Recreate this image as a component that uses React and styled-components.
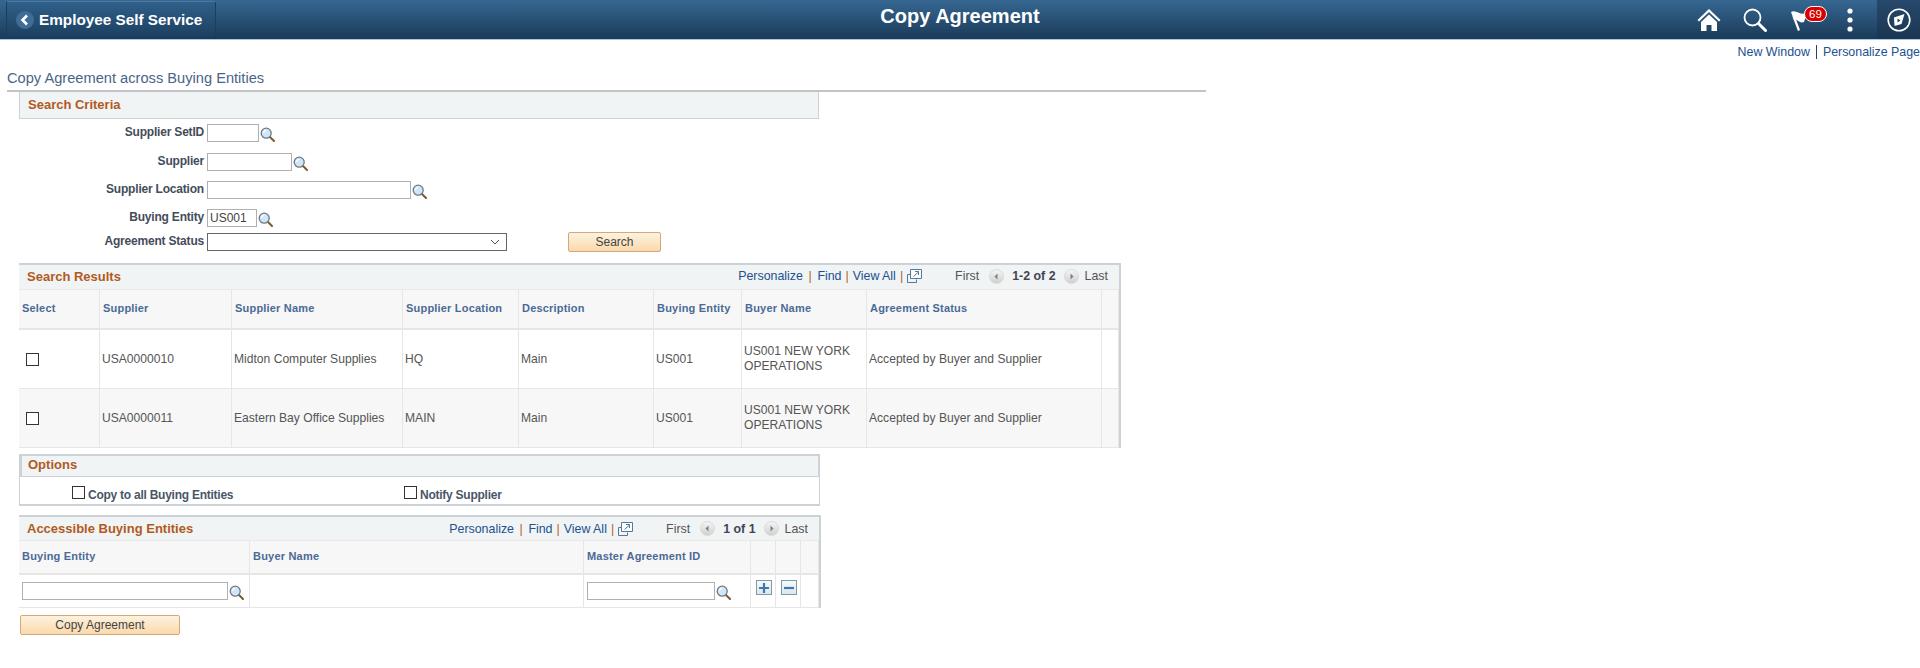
import React from "react";
import styled, { createGlobalStyle } from "styled-components";

const Global = createGlobalStyle`
  html, body { margin: 0; padding: 0; background: #fff; }
  body { font-family: "Liberation Sans", Arial, sans-serif; font-size: 12px; color: #444; }
  * { box-sizing: border-box; }
`;

const Banner = styled.header`
  display: grid;
  grid-template-columns: 1fr auto 1fr;
  height: 40px;
  background: linear-gradient(#366791 0%, #2a5378 45%, #1a3a58 100%);
  border-bottom: 1px solid #a9c6e4;
`;
const BackButton = styled.button`
  justify-self: start;
  display: flex;
  align-items: center;
  width: 210px;
  height: 37px;
  margin: 1px 0 0 6px;
  padding: 0 0 0 9px;
  gap: 5px;
  background: linear-gradient(#30608a, #1c3f60);
  border: 1px solid #1d3c59;
  border-top-color: #4c7aa3;
  border-radius: 3px;
  color: #fff;
  font: bold 15.3px "Liberation Sans", Arial, sans-serif;
`;
const BannerTitle = styled.h1`
  margin: 0;
  font: bold 20px/33px "Liberation Sans", Arial, sans-serif;
  color: #fff;
`;
const BannerIcons = styled.div`
  justify-self: end;
  display: flex;
  align-items: center;
  height: 39px;
`;
const IconSlot = styled.span`
  display: flex;
  align-items: center;
  margin-right: ${(p) => p.$gap}px;
`;
const Flag = styled.span`
  position: relative;
  display: flex;
  width: 36px;
  margin-right: 20px;
`;
const Badge = styled.span`
  position: absolute;
  left: 13px;
  top: -3px;
  width: 23px;
  height: 16px;
  border-radius: 8px;
  background: #d80000;
  border: 1px solid #fff;
  color: #fff;
  font-size: 11.5px;
  line-height: 14px;
  text-align: center;
`;
const CompassPanel = styled.span`
  display: flex;
  align-items: center;
  justify-content: center;
  width: 43px;
  height: 39px;
  background: linear-gradient(#28496c, #1a3550);
`;
const LinkBar = styled.nav`
  display: flex;
  justify-content: flex-end;
  align-items: center;
  height: 14px;
  margin-top: 5px;
  font-size: 12.4px;
`;
const PageLink = styled.a`
  color: #23508f;
`;
const LinkDivider = styled.span`
  width: 1px;
  height: 14px;
  margin: 0 6px;
  background: #2c3f70;
`;
const PageTitle = styled.h2`
  width: 1199px;
  height: 33px;
  margin: 0 0 0 7px;
  padding-top: 10px;
  border-bottom: 2px solid #c4c4c4;
  font: normal 14.65px/18px "Liberation Sans", Arial, sans-serif;
  color: #4a6488;
`;
const SectionBar = styled.div`
  display: flex;
  align-items: center;
  justify-content: space-between;
  height: ${(p) => p.$h}px;
  padding-left: 8px;
  padding-bottom: ${(p) => p.$pb || 0}px;
  background: #f0f4f4;
  color: #b25a1e;
  font-weight: bold;
  font-size: 13px;
`;
const CriteriaBar = styled(SectionBar)`
  width: 800px;
  margin-left: 19px;
  border: 1px solid #ccd2d6;
  border-top: 0;
`;
const Form = styled.div`
  display: flex;
  flex-direction: column;
  margin-top: 5px;
`;
const FormRow = styled.div`
  display: flex;
  align-items: center;
  height: 18px;
  margin-bottom: ${(p) => p.$after}px;
`;
const FormLabel = styled.label`
  width: 204px;
  margin-right: 3px;
  text-align: right;
  font-weight: bold;
  font-size: 12px;
  letter-spacing: -0.2px;
  color: #444c5a;
  position: relative;
  top: -1px;
`;
const TextInput = styled.input`
  width: ${(p) => p.$w}px;
  height: 18px;
  padding: 0 2px;
  border: 1px solid #b0b0b0;
  border-radius: 0;
  background: #fff;
  font: 12px "Liberation Sans", Arial, sans-serif;
  color: #444;
  outline: none;
`;
const Lookup = styled.svg`
  display: block;
  flex: none;
  margin-left: 1px;
  margin-top: 2px;
`;
const SelectBox = styled.div`
  display: flex;
  align-items: center;
  justify-content: flex-end;
  width: 300px;
  height: 18px;
  padding-right: 6px;
  border: 1px solid #666;
  background: #fff;
`;
const ActionButton = styled.button`
  width: ${(p) => p.$w}px;
  height: 20px;
  padding: 0;
  margin-left: ${(p) => p.$left}px;
  border: 1px solid #d4a878;
  border-radius: 2px;
  background: linear-gradient(#fdf2df, #fbd9ac);
  color: #444;
  font: 12px "Liberation Sans", Arial, sans-serif;
`;
const GridBox = styled.section`
  width: ${(p) => p.$w}px;
  margin: ${(p) => p.$top}px 0 0 19px;
  border-top: 2px solid #ccd2d6;
  border-right: 2px solid #ccd2d6;
`;
const Toolbar = styled.div`
  display: flex;
  align-items: center;
  font-weight: normal;
  font-size: 12.4px;
  color: #555;
  padding-right: 11px;
`;
const ToolLink = styled.a`
  color: #23508f;
`;
const ToolSep = styled.span`
  color: #b25a1e;
  margin: 0 ${(p) => p.$m}px;
`;
const PageCount = styled.b`
  margin: 0 8px;
  color: #445;
`;
const First = styled.span`
  margin: 0 10px 0 33px;
`;
const Last = styled.span`
  margin-left: 6px;
`;
const Table = styled.div`
  display: grid;
  grid-template-columns: ${(p) => p.$cols};
`;
const HeadCell = styled.div`
  display: flex;
  align-items: center;
  height: ${(p) => p.$h}px;
  padding: 0 0 2px 3px;
  background: #f7f7f7;
  border-right: 1px solid #e6e6e6;
  border-bottom: 2px solid #e6e6e6;
  border-top: 1px solid #e8e8e8;
  font-weight: bold;
  font-size: 11px;
  letter-spacing: 0.2px;
  color: #4a6a96;
`;
const Cell = styled.div`
  display: flex;
  align-items: center;
  height: ${(p) => p.$h}px;
  padding-left: 2px;
  background: ${(p) => (p.$alt ? "#f7f7f7" : "#fff")};
  border-right: 1px solid #e6e6e6;
  border-bottom: 1px solid #e6e6e6;
  font-size: 12.1px;
  line-height: 15px;
  color: #555;
`;
const CheckCell = styled(Cell)`
  padding-left: 7px;
`;
const InputCell = styled(Cell)`
  padding-left: 3px;
`;
const Check = styled.span`
  display: block;
  flex: none;
  width: 13px;
  height: 13px;
  border: 1px solid #333;
  background: #fff;
`;
const OptionsBox = styled.section`
  width: 801px;
  height: 52px;
  margin: 6px 0 0 19px;
  border: 1px solid #ccd2d6;
  border-top-width: 2px;
  border-bottom-width: 2px;
`;
const OptionsBar = styled(SectionBar)`
  border-bottom: 1px solid #ccd2d6;
  border-left: 2px solid #ccd2d6;
  border-right: 1px solid #ccd2d6;
  padding-left: 6px;
`;
const OptionsRow = styled.div`
  display: grid;
  grid-template-columns: 332px auto;
  justify-content: start;
  padding: 9px 0 0 52px;
`;
const OptionLabel = styled.label`
  display: flex;
  align-items: flex-start;
  gap: 3px;
  font-weight: bold;
  font-size: 12px;
  letter-spacing: -0.25px;
  line-height: 18px;
  color: #4a5668;
`;
const AddRemove = styled.span`
  display: flex;
  align-items: center;
  justify-content: center;
  width: 16px;
  height: 15px;
  margin: -7px 0 0 3px;
  border: 1px solid #7d9aa8;
  background: linear-gradient(#f6f9fa, #dde7ec);
`;
const FooterAction = styled.div`
  margin: 7px 0 0 20px;
  display: flex;
`;

const Glass = () => (
  <Lookup width="15" height="15" viewBox="0 0 15 15">
    <path d="M10 10L14 14" stroke="#7a5a34" strokeWidth="2" strokeLinecap="round" />
    <circle cx="6.2" cy="6.2" r="5" fill="#cfe6f8" stroke="#6f7880" strokeWidth="1.3" />
    <path d="M3.6 6a2.6 2.6 0 0 1 2.6-2.6" fill="none" stroke="#fff" strokeWidth="1.2" />
  </Lookup>
);
const Chevron = () => (
  <svg width="10" height="6" viewBox="0 0 10 6"><path d="M1 1l4 4 4-4" fill="none" stroke="#555" strokeWidth="1" /></svg>
);
const ArrowBtn = ({ right }) => (
  <svg width="15" height="15" viewBox="0 0 15 15">
    <defs>
      <linearGradient id="ab" x1="0" y1="0" x2="0" y2="1"><stop offset="0" stopColor="#f6f6f6" /><stop offset="1" stopColor="#cfcfcf" /></linearGradient>
    </defs>
    <circle cx="7.5" cy="7.5" r="7" fill="url(#ab)" stroke="#dadada" />
    <path d={right ? "M6.5 4.5l3 3-3 3z" : "M8.5 4.5l-3 3 3 3z"} fill="#808080" />
  </svg>
);
const NewWin = () => (
  <svg width="15" height="14" viewBox="0 0 15 14">
    <path d="M0.5 5.5h3M0.5 5.5v8h9v-3" fill="none" stroke="#557a99" />
    <path d="M3.5 0.5h11v9h-11z" fill="#fff" stroke="#557a99" />
    <path d="M6.5 7.5l5-4.5M8 2.5h3.5v3.5" fill="none" stroke="#557a99" />
  </svg>
);

const Tools = ({ count }) => (
  <Toolbar>
    <ToolLink>Personalize</ToolLink>
    <ToolSep $m={5.6}>|</ToolSep>
    <ToolLink>Find</ToolLink>
    <ToolSep $m={4}>|</ToolSep>
    <ToolLink>View All</ToolLink>
    <ToolSep $m={4}>|</ToolSep>
    <NewWin />
    <First>First</First>
    <ArrowBtn />
    <PageCount>{count}</PageCount>
    <ArrowBtn right />
    <Last>Last</Last>
  </Toolbar>
);

const resultCols = "81px 132px 171px 116px 135px 88px 125px 235px 17px";
const resultHeads = ["Select", "Supplier", "Supplier Name", "Supplier Location", "Description", "Buying Entity", "Buyer Name", "Agreement Status", ""];
const rows = [
  ["USA0000010", "Midton Computer Supplies", "HQ"],
  ["USA0000011", "Eastern Bay Office Supplies", "MAIN"],
];

export default function App() {
  return (
    <>
      <Global />
      <Banner>
        <BackButton>
          <svg width="18" height="18" viewBox="0 0 18 18">
            <circle cx="9" cy="9" r="9" fill="#3f6d96" />
            <path d="M11 4.5L6.5 9l4.5 4.5" fill="none" stroke="#fff" strokeWidth="2.6" />
          </svg>
          Employee Self Service
        </BackButton>
        <BannerTitle>Copy Agreement</BannerTitle>
        <BannerIcons>
          <IconSlot $gap={22}>
            <svg width="24" height="23" viewBox="0 0 24 23">
              <path d="M12 1L0.5 12l1.5 1.5L12 4l10 9.5 1.5-1.5z" fill="#fff" />
              <path d="M4 14l8-7.5 8 7.5v9h-5.5v-6h-5v6H4z" fill="#fff" />
            </svg>
          </IconSlot>
          <IconSlot $gap={24}>
            <svg width="24" height="24" viewBox="0 0 24 24">
              <circle cx="9.5" cy="9.5" r="8" fill="none" stroke="#fff" strokeWidth="1.8" />
              <path d="M15.5 15.5L22.5 22.5" stroke="#fff" strokeWidth="3" strokeLinecap="round" />
            </svg>
          </IconSlot>
          <Flag>
            <svg width="18" height="22" viewBox="0 0 18 22">
              <path d="M0 3C5 0 9 7 16 4L13 13C8 15 6 9 3 11z" fill="#fff" />
              <path d="M2.5 7L8 21.5" stroke="#fff" strokeWidth="2.2" />
            </svg>
            <Badge>69</Badge>
          </Flag>
          <IconSlot $gap={24}>
            <svg width="6" height="24" viewBox="0 0 6 24">
              <circle cx="3" cy="3" r="2.6" fill="#fff" />
              <circle cx="3" cy="12" r="2.6" fill="#fff" />
              <circle cx="3" cy="21" r="2.6" fill="#fff" />
            </svg>
          </IconSlot>
          <CompassPanel>
            <svg width="24" height="24" viewBox="0 0 24 24">
              <circle cx="12" cy="12" r="10.8" fill="none" stroke="#fff" strokeWidth="1.6" />
              <path d="M7 9.5L17.5 6l-3 10L7.5 18z" fill="#fff" />
              <path d="M10.5 10.5l3 2-3 2z" fill="#1f3f60" />
            </svg>
          </CompassPanel>
        </BannerIcons>
      </Banner>

      <LinkBar>
        <PageLink>New Window</PageLink>
        <LinkDivider />
        <PageLink>Personalize Page</PageLink>
      </LinkBar>

      <PageTitle>Copy Agreement across Buying Entities</PageTitle>
      <CriteriaBar $h={27} $pb={2}>Search Criteria</CriteriaBar>

      <Form>
        <FormRow $after={11}>
          <FormLabel>Supplier SetID</FormLabel>
          <TextInput $w={52} />
          <Glass />
        </FormRow>
        <FormRow $after={10}>
          <FormLabel>Supplier</FormLabel>
          <TextInput $w={85} />
          <Glass />
        </FormRow>
        <FormRow $after={10}>
          <FormLabel>Supplier Location</FormLabel>
          <TextInput $w={204} />
          <Glass />
        </FormRow>
        <FormRow $after={6}>
          <FormLabel>Buying Entity</FormLabel>
          <TextInput $w={50} defaultValue="US001" />
          <Glass />
        </FormRow>
        <FormRow $after={0}>
          <FormLabel>Agreement Status</FormLabel>
          <SelectBox><Chevron /></SelectBox>
          <ActionButton $w={93} $left={61}>Search</ActionButton>
        </FormRow>
      </Form>

      <GridBox $w={1102} $top={12}>
        <SectionBar $h={24} $pb={2}>
          Search Results
          <Tools count="1-2 of 2" />
        </SectionBar>
        <Table $cols={resultCols}>
          {resultHeads.map((h, i) => (
            <HeadCell key={i} $h={41}>{h}</HeadCell>
          ))}
          {rows.map((r, i) => (
            <React.Fragment key={r[0]}>
              <CheckCell $h={59} $alt={i === 1}><Check /></CheckCell>
              <Cell $h={59} $alt={i === 1}>{r[0]}</Cell>
              <Cell $h={59} $alt={i === 1}>{r[1]}</Cell>
              <Cell $h={59} $alt={i === 1}>{r[2]}</Cell>
              <Cell $h={59} $alt={i === 1}>Main</Cell>
              <Cell $h={59} $alt={i === 1}>US001</Cell>
              <Cell $h={59} $alt={i === 1}>US001 NEW YORK OPERATIONS</Cell>
              <Cell $h={59} $alt={i === 1}>Accepted by Buyer and Supplier</Cell>
              <Cell $h={59} $alt={i === 1} />
            </React.Fragment>
          ))}
        </Table>
      </GridBox>

      <OptionsBox>
        <OptionsBar $h={21} $pb={3}>Options</OptionsBar>
        <OptionsRow>
          <OptionLabel><Check />Copy to all Buying Entities</OptionLabel>
          <OptionLabel><Check />Notify Supplier</OptionLabel>
        </OptionsRow>
      </OptionsBox>

      <GridBox $w={802} $top={9}>
        <SectionBar $h={23}>
          Accessible Buying Entities
          <Tools count="1 of 1" />
        </SectionBar>
        <Table $cols="231px 334px 167px 25px 25px 18px">
          <HeadCell $h={35}>Buying Entity</HeadCell>
          <HeadCell $h={35}>Buyer Name</HeadCell>
          <HeadCell $h={35}>Master Agreement ID</HeadCell>
          <HeadCell $h={35} />
          <HeadCell $h={35} />
          <HeadCell $h={35} />
          <InputCell $h={33}>
            <TextInput $w={206} />
            <Glass />
          </InputCell>
          <Cell $h={33} />
          <InputCell $h={33}>
            <TextInput $w={128} />
            <Glass />
          </InputCell>
          <Cell $h={33}>
            <AddRemove>
              <svg width="10" height="10" viewBox="0 0 10 10"><path d="M0 5h10M5 0v10" stroke="#3c78b4" strokeWidth="2.2" /></svg>
            </AddRemove>
          </Cell>
          <Cell $h={33}>
            <AddRemove>
              <svg width="10" height="10" viewBox="0 0 10 10"><path d="M0 5h10" stroke="#3c78b4" strokeWidth="2.2" /></svg>
            </AddRemove>
          </Cell>
          <Cell $h={33} />
        </Table>
      </GridBox>

      <FooterAction>
        <ActionButton $w={160} $left={0}>Copy Agreement</ActionButton>
      </FooterAction>
    </>
  );
}
